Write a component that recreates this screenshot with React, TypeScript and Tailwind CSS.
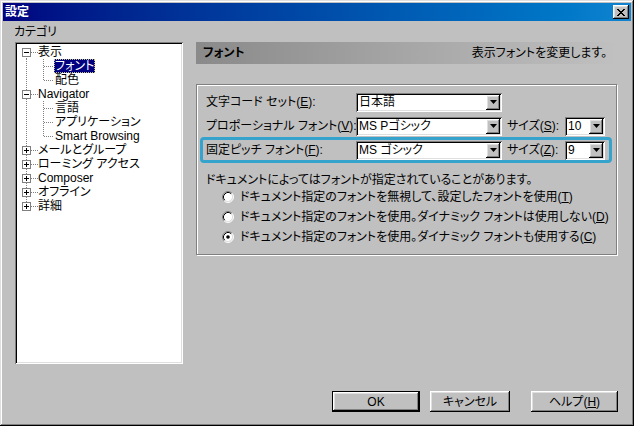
import React from 'react';

const FONT = "font-['Liberation_Sans','Noto_Sans_CJK_JP',sans-serif] [font-feature-settings:'palt']";
const RAISED = 'shadow-[inset_-1px_-1px_#000,inset_1px_1px_#fff,inset_-2px_-2px_#808080,inset_2px_2px_#dfdfdf]';
const SUNKEN = 'shadow-[inset_1px_1px_#808080,inset_-1px_-1px_#fff,inset_2px_2px_#000,inset_-2px_-2px_#dfdfdf]';

interface TreeItem {
    level: 0 | 1;
    label: string;
    box?: 'minus' | 'plus';
    first?: boolean;
    last?: boolean;
    lastChild?: boolean;
    selected?: boolean;
}

const tree: TreeItem[] = [
    { level: 0, label: '表示', box: 'minus', first: true },
    { level: 1, label: 'フォント', selected: true },
    { level: 1, label: '配色', lastChild: true },
    { level: 0, label: 'Navigator', box: 'minus' },
    { level: 1, label: '言語' },
    { level: 1, label: 'アプリケーション' },
    { level: 1, label: 'Smart Browsing', lastChild: true },
    { level: 0, label: 'メールとグループ', box: 'plus' },
    { level: 0, label: 'ローミング アクセス', box: 'plus' },
    { level: 0, label: 'Composer', box: 'plus' },
    { level: 0, label: 'オフライン', box: 'plus' },
    { level: 0, label: '詳細', box: 'plus', last: true },
];

// dotted connector lines + expand box for one tree row
const Gutter: React.FC<{ item: TreeItem }> = ({ item }) => {
    const dot = { stroke: '#808080', strokeDasharray: '1 1', strokeWidth: 1 };
    if (item.level === 0) {
        return (
            <svg width={21} height={14} className="shrink-0">
                <line x1={9.5} y1={item.first ? 7 : 0} x2={9.5} y2={item.last ? 7 : 14} {...dot} />
                <line x1={14} y1={7.5} x2={21} y2={7.5} {...dot} />
                <rect x={5.5} y={3.5} width={8} height={8} fill="#fff" stroke="#808080" />
                <line x1={7} y1={7.5} x2={12} y2={7.5} stroke="#000" />
                {item.box === 'plus' && <line x1={9.5} y1={5} x2={9.5} y2={10} stroke="#000" />}
            </svg>
        );
    }
    return (
        <svg width={38} height={14} className="shrink-0">
            <line x1={9.5} y1={0} x2={9.5} y2={14} {...dot} />
            <line x1={26.5} y1={0} x2={26.5} y2={item.lastChild ? 8 : 14} {...dot} />
            <line x1={27} y1={7.5} x2={36} y2={7.5} {...dot} />
        </svg>
    );
};

const Arrow = () => (
    <svg width={7} height={4} viewBox="0 0 7 4">
        <polygon points="0,0 7,0 3.5,4" fill="#000" />
    </svg>
);

const Combo: React.FC<{ value: string; className: string }> = ({ value, className }) => (
    <div className={`flex h-[19px] bg-white p-[2px] ${SUNKEN} ${className}`}>
        <div className="flex-1 pl-[1px] leading-[15px] overflow-hidden">{value}</div>
        <div className={`w-[14px] h-[15px] bg-[#c0c0c0] flex items-center justify-center ${RAISED}`}>
            <Arrow />
        </div>
    </div>
);

const Key: React.FC<{ k: string }> = ({ k }) => (
    <span>
        (<span className="underline underline-offset-1">{k}</span>)
    </span>
);

const Radio: React.FC<{ checked?: boolean }> = ({ checked }) => (
    <svg width={12} height={12} className="shrink-0">
        <circle cx={6} cy={6} r={5} fill="#fff" />
        <path d="M2.11 9.89A5.5 5.5 0 0 1 9.89 2.11" fill="none" stroke="#808080" />
        <path d="M9.89 2.11A5.5 5.5 0 0 1 2.11 9.89" fill="none" stroke="#fff" />
        <path d="M2.82 9.18A4.5 4.5 0 0 1 9.18 2.82" fill="none" stroke="#000" />
        <path d="M9.18 2.82A4.5 4.5 0 0 1 2.82 9.18" fill="none" stroke="#dfdfdf" />
        {checked && <circle cx={6} cy={6} r={1.8} fill="#000" />}
    </svg>
);

const Btn: React.FC<{ children: React.ReactNode; className: string; isDefault?: boolean }> = ({
    children,
    className,
    isDefault,
}) => (
    <div className={`h-[21px] ${isDefault ? 'border border-black' : ''} ${className}`}>
        <div className={`h-full flex items-center justify-center bg-[#c0c0c0] ${RAISED}`}>{children}</div>
    </div>
);

export default function App() {
    return (
        <div
            className={`w-[634px] h-[426px] bg-[#c0c0c0] p-[3px] flex flex-col text-[12px] leading-[14px] text-black whitespace-nowrap ${FONT} shadow-[inset_-1px_-1px_#000,inset_1px_1px_#dfdfdf,inset_-2px_-2px_#808080,inset_2px_2px_#fff]`}
        >
            {/* Title bar */}
            <div className="h-[18px] flex items-center justify-between pl-[2px] pr-[2px] bg-linear-to-r from-[#000080] to-[#1084d0]">
                <span className="text-white font-bold">設定</span>
                <div className={`w-[16px] h-[14px] bg-[#c0c0c0] flex items-center justify-center ${RAISED}`}>
                    <svg width={8} height={7} viewBox="0 0 8 7">
                        <path d="M0 0L7 7M1 0L8 7M7 0L0 7M8 0L1 7" stroke="#000" strokeWidth={1} />
                    </svg>
                </div>
            </div>

            {/* Body */}
            <div className="flex pl-[12px]">
                <div className="w-[168px]">
                    <div className="h-[21px] flex items-center -ml-px">カテゴリ</div>
                    <div className={`h-[322px] bg-white p-[2px] pt-[3px] ${SUNKEN}`}>
                        {tree.map((item) => (
                            <div key={item.label} className="flex items-center h-[14px]">
                                <Gutter item={item} />
                                {item.selected ? (
                                    <span className="bg-[#000080] text-white px-[1px] -ml-px outline outline-1 outline-dotted outline-[#c0c080] -outline-offset-1">
                                        {item.label}
                                    </span>
                                ) : (
                                    <span>{item.label}</span>
                                )}
                            </div>
                        ))}
                    </div>
                </div>

                <div className="ml-[13px] w-[421px] pt-[21px]">
                    {/* Header */}
                    <div className="h-[22px] flex items-center justify-between pl-[7px] pr-[10px] bg-linear-to-r from-[#8a8a8a] via-[#a6a6a6] to-[#c0c0c0]">
                        <span className="font-bold">フォント</span>
                        <span>表示フォントを変更します。</span>
                    </div>

                    {/* Group */}
                    <div className="mt-[20px] border border-[#808080] shadow-[inset_1px_1px_#fff,1px_1px_#fff] pt-[5px] pb-[7px]">
                        <div className="flex items-center h-[24px] pl-[9px]">
                            <div className="w-[150px]">
                                文字コード セット<Key k="E" />:
                            </div>
                            <Combo value="日本語" className="w-[146px]" />
                        </div>
                        <div className="flex items-center h-[24px] pl-[9px]">
                            <div className="w-[150px]">
                                プロポーショナル フォント<Key k="V" />:
                            </div>
                            <Combo value="MS Pゴシック" className="w-[146px]" />
                            <div className="ml-[5px] w-[58px]">
                                サイズ<Key k="S" />:
                            </div>
                            <Combo value="10" className="w-[40px]" />
                        </div>
                        <div className="relative flex items-center h-[24px] pl-[9px]">
                            <div className="w-[150px]">
                                固定ピッチ フォント<Key k="F" />:
                            </div>
                            <Combo value="MS ゴシック" className="w-[146px]" />
                            <div className="ml-[5px] w-[58px]">
                                サイズ<Key k="Z" />:
                            </div>
                            <Combo value="9" className="w-[40px]" />
                            <span className="absolute -top-px -bottom-px left-[3px] right-[4px] border-[3px] border-[#35a3cc] rounded-[4px] pointer-events-none" />
                        </div>

                        <div className="mt-[11px] h-[14px] pl-[9px]">
                            ドキュメントによってはフォントが指定されていることがあります。
                        </div>
                        <div className="flex items-center h-[20px] pl-[25px] gap-[6px]">
                            <Radio />
                            <span>
                                ドキュメント指定のフォントを無視して、設定したフォントを使用<Key k="T" />
                            </span>
                        </div>
                        <div className="flex items-center h-[20px] pl-[25px] gap-[6px]">
                            <Radio />
                            <span>
                                ドキュメント指定のフォントを使用。ダイナミック フォントは使用しない<Key k="D" />
                            </span>
                        </div>
                        <div className="flex items-center h-[20px] pl-[25px] gap-[6px]">
                            <Radio checked />
                            <span>
                                ドキュメント指定のフォントを使用。ダイナミック フォントも使用する<Key k="C" />
                            </span>
                        </div>
                    </div>
                </div>
            </div>

            {/* Buttons */}
            <div className="mt-[27px] flex justify-end pr-[13px]">
                <Btn className="w-[88px]" isDefault>
                    OK
                </Btn>
                <Btn className="ml-[10px] w-[80px]">キャンセル</Btn>
                <Btn className="ml-[21px] w-[87px]">
                    <span>
                        ヘルプ<Key k="H" />
                    </span>
                </Btn>
            </div>
        </div>
    );
}
